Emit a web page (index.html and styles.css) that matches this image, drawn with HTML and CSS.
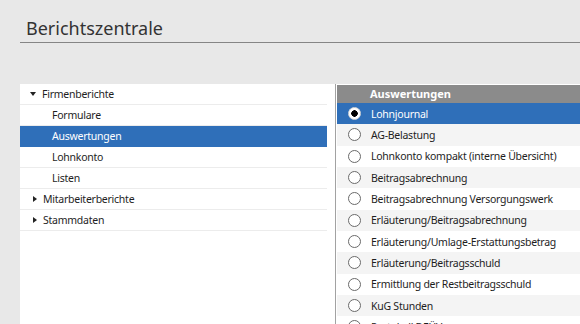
FILE: index.html
```html
<!DOCTYPE html>
<html lang="de">
<head>
    <meta charset="UTF-8">
    <title>Berichtszentrale</title>
    <link rel="stylesheet" href="styles.css">
</head>
<body>
    <header class="title">Berichtszentrale</header>
    <main class="center">
        <aside class="tree">
            <div class="node open"><span class="arrow down"></span>Firmenberichte</div>
            <div class="node child">Formulare</div>
            <div class="node child selected">Auswertungen</div>
            <div class="node child">Lohnkonto</div>
            <div class="node child">Listen</div>
            <div class="node"><span class="arrow right"></span>Mitarbeiterberichte</div>
            <div class="node"><span class="arrow right"></span>Stammdaten</div>
        </aside>
        <section class="reports">
            <div class="reports-head">Auswertungen</div>
            <div class="report selected"><span class="radio checked"></span>Lohnjournal</div>
            <div class="report"><span class="radio"></span>AG-Belastung</div>
            <div class="report"><span class="radio"></span>Lohnkonto kompakt (interne Übersicht)</div>
            <div class="report"><span class="radio"></span>Beitragsabrechnung</div>
            <div class="report"><span class="radio"></span>Beitragsabrechnung Versorgungswerk</div>
            <div class="report"><span class="radio"></span>Erläuterung/Beitragsabrechnung</div>
            <div class="report"><span class="radio"></span>Erläuterung/Umlage-Erstattungsbetrag</div>
            <div class="report"><span class="radio"></span>Erläuterung/Beitragsschuld</div>
            <div class="report"><span class="radio"></span>Ermittlung der Restbeitragsschuld</div>
            <div class="report"><span class="radio"></span>KuG Stunden</div>
            <div class="report"><span class="radio"></span>Protokoll DEÜV</div>
        </section>
    </main>
</body>
</html>
```

FILE: styles.css
```css
body {
    margin: 0;
    height: 324px;
    overflow: hidden;
    background-color: #e8e8e8;
    font-family: "Noto Sans", "Open Sans", sans-serif;
    display: flex;
    flex-direction: column;
}
.title {
    margin-left: 20px;
    padding: 16px 0 0 6px;
    height: 26px;
    box-sizing: content-box;
    border-bottom: 1px solid #858585;
    font-size: 18px;
    color: #333;
    line-height: 24px;
}
.center {
    display: flex;
    flex: 1;
    margin-top: 41px;
    margin-left: 20px;
    overflow: hidden;
}
.tree {
    width: 315px;
    background-color: #fff;
    padding-right: 8px;
    box-sizing: border-box;
}
.node {
    height: 21px;
    line-height: 20px;
    font-size: 10.5px;
    letter-spacing: -0.25px;
    color: #1e1e1e;
    border-bottom: 1px solid #ececec;
    box-sizing: border-box;
    padding-left: 10px;
    display: flex;
    align-items: center;
}
.node.child {
    padding-left: 32px;
}
.node.selected {
    background-color: #2f6fb9;
    color: #fff;
    border-bottom-color: #2f6fb9;
}
.arrow {
    width: 0;
    height: 0;
    margin-right: 6px;
}
.arrow.down {
    border-left: 3.5px solid transparent;
    border-right: 3.5px solid transparent;
    border-top: 4px solid #222;
}
.arrow.right {
    margin-left: 3px;
    margin-right: 6px;
    border-top: 3.5px solid transparent;
    border-bottom: 3.5px solid transparent;
    border-left: 4px solid #222;
}
.reports {
    flex: 1;
    background-color: #fff;
    border-left: 1px solid #a2a2a2;
    padding-left: 1px;
    padding-top: 1px;
}
.reports-head {
    height: 18px;
    line-height: 18px;
    background-color: #8b8b8b;
    color: #fff;
    font-weight: bold;
    font-size: 11px;
    padding-left: 33px;
}
.report {
    height: 21.33px;
    font-size: 10.5px;
    letter-spacing: -0.25px;
    color: #1e1e1e;
    display: flex;
    align-items: center;
    padding-left: 11px;
}
.report:nth-child(odd) {
    background-color: #f4f4f4;
}
.report.selected {
    background-color: #2f6fb9;
    color: #fff;
}
.radio {
    width: 11px;
    height: 11px;
    border: 1px solid #6a6a6a;
    border-radius: 50%;
    background-color: #fff;
    margin-right: 10px;
    flex: none;
}
.radio.checked {
    border-color: #d8d8d8;
    background: radial-gradient(circle, #000 0, #000 3px, #fff 3.5px);
}
```
